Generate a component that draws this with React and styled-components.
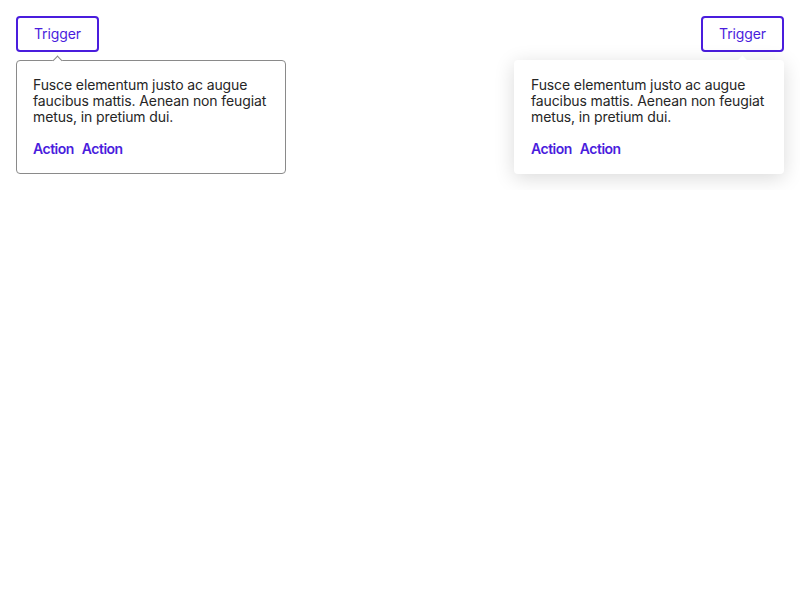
import React from 'react';
import styled, { createGlobalStyle, css } from 'styled-components';

const GlobalStyle = createGlobalStyle`
  * { box-sizing: border-box; }
  body {
    margin: 0;
    background: #ffffff;
    font-family: Inter, "Noto Sans", sans-serif;
  }
`;

const Page = styled.div`
  display: flex;
  justify-content: space-between;
  align-items: flex-start;
  padding: 16px;
`;

const Column = styled.div`
  display: flex;
  flex-direction: column;
  align-items: ${props => (props.$align === 'end' ? 'flex-end' : 'flex-start')};
  gap: 8px;
`;

const Trigger = styled.button`
  height: 36px;
  padding: 0 16px;
  border: 2px solid #4a1ddd;
  border-radius: 4px;
  background: #fff;
  color: #4a1ddd;
  font-family: Inter, sans-serif;
  font-size: 14px;
  line-height: 16px;
  letter-spacing: -0.12px;
  cursor: pointer;
`;

const Popover = styled.div`
  position: relative;
  width: 270px;
  padding: 16px;
  border-radius: 4px;
  background: #fff;
  color: #262626;
  ${props =>
    props.$elevated
      ? css`
          border: 1px solid transparent;
          box-shadow: 0 4px 20px rgba(0, 0, 0, 0.15);
        `
      : css`
          border: 1px solid #8a8a8a;
        `}
`;

const Arrow = styled.span`
  position: absolute;
  top: -4px;
  width: 7px;
  height: 7px;
  background: #fff;
  transform: rotate(45deg);
  ${props => (props.$side === 'right' ? 'right: 37px;' : 'left: 37px;')}
  ${props =>
    props.$elevated
      ? css`border: 0;`
      : css`
          border-top: 1px solid #8a8a8a;
          border-left: 1px solid #8a8a8a;
        `}
`;

const Body = styled.p`
  margin: 0;
  font-size: 14px;
  line-height: 16px;
  letter-spacing: -0.12px;
`;

const Actions = styled.div`
  display: flex;
  gap: 8px;
  margin-top: 16px;
`;

const ActionLink = styled.a`
  color: #4a1ddd;
  font-size: 14px;
  line-height: 16px;
  font-weight: 600;
  letter-spacing: -0.5px;
  text-decoration: none;
  cursor: pointer;
`;

const text = 'Fusce elementum justo ac augue faucibus mattis. Aenean non feugiat metus, in pretium dui.';

function PopoverBox({ elevated, side }) {
  return (
    <Popover $elevated={elevated}>
      <Arrow $side={side} $elevated={elevated} />
      <Body>{text}</Body>
      <Actions>
        <ActionLink>Action</ActionLink>
        <ActionLink>Action</ActionLink>
      </Actions>
    </Popover>
  );
}

export default function App() {
  return (
    <>
      <GlobalStyle />
      <Page>
        <Column>
          <Trigger>Trigger</Trigger>
          <PopoverBox side="left" />
        </Column>
        <Column $align="end">
          <Trigger>Trigger</Trigger>
          <PopoverBox side="right" elevated />
        </Column>
      </Page>
    </>
  );
}
